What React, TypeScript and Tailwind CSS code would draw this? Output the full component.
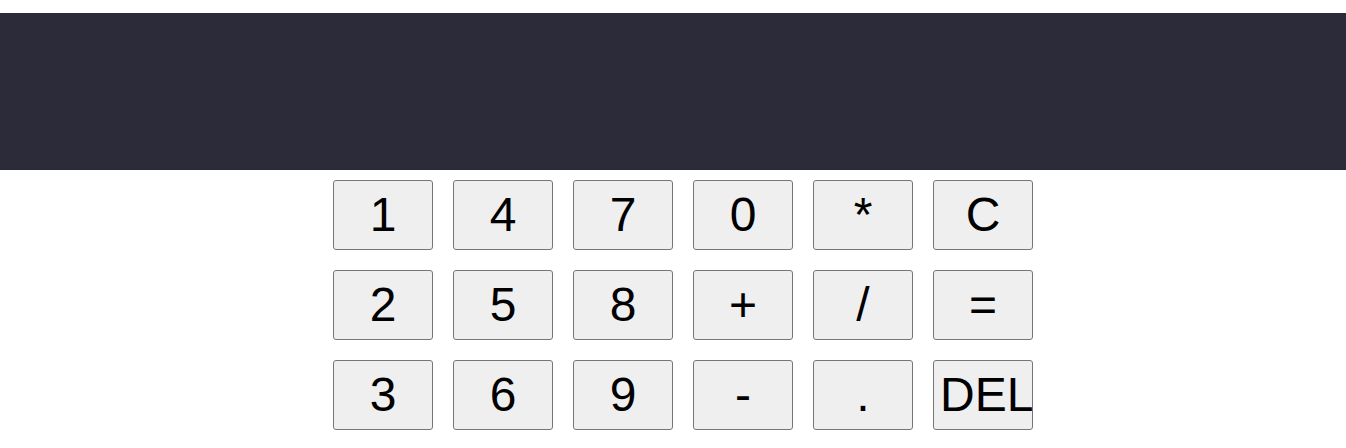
const columns = [
  ["1", "2", "3"],
  ["4", "5", "6"],
  ["7", "8", "9"],
  ["0", "+", "-"],
  ["*", "/", "."],
  ["C", "=", "DEL"],
];

export default function App() {
  return (
    <div className="min-h-screen bg-white pt-[13px] font-['Liberation_Sans',Arial,sans-serif]">
      <div className="h-[157px] w-full bg-[#2c2b3a]" />

      <div className="flex justify-center gap-5 pt-[10px] pl-5">
        {columns.map((col, i) => (
          <div key={i} className="flex flex-col gap-5">
            {col.map((key) => (
              <button
                key={key}
                type="button"
                className={
                  "flex h-[70px] w-[100px] items-center overflow-hidden whitespace-nowrap rounded-[3px] border border-[#767676] bg-[#efefef] px-[6px] text-[48px] leading-none text-black " +
                  (key.length > 1 ? "justify-start" : "justify-center")
                }
              >
                {key}
              </button>
            ))}
          </div>
        ))}
      </div>
    </div>
  );
}
